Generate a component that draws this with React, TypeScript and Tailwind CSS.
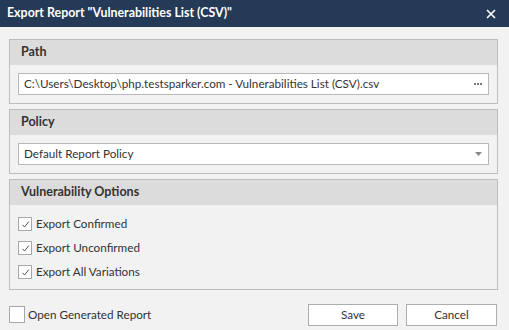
import React from 'react';

const font = { fontFamily: 'Lato, "Open Sans", sans-serif' };

const Check = ({ checked }: { checked: boolean }) => (
  <span className="w-[14px] h-[14px] border border-[#a8a8a8] bg-white flex items-center justify-center shrink-0">
    {checked && (
      <svg width="9" height="9" viewBox="0 0 9 9">
        <path d="M1.5 4.8 L3.5 7 L7.8 1.6" fill="none" stroke="#555" strokeWidth="1" />
      </svg>
    )}
  </span>
);

const Group = ({ title, children }: { title: string; children: React.ReactNode }) => (
  <div className="border border-[#bdbdbd] bg-[#f2f2f2]">
    <div className="h-[25px] bg-[#dcdcdc] flex items-center px-[11px] text-[12.5px] font-bold text-[#333]">{title}</div>
    {children}
  </div>
);

export default function App() {
  const options = ['Export Confirmed', 'Export Unconfirmed', 'Export All Variations'];
  return (
    <div className="w-[509px] h-[330px] bg-[#f2f2f2] flex flex-col text-[#333]" style={font}>
      <div className="h-[27px] bg-[#243a56] flex items-center justify-between pl-[7px] pr-[13px] text-white">
        <span className="text-[12.4px] font-bold">Export Report "Vulnerabilities List (CSV)"</span>
        <svg width="10" height="10" viewBox="0 0 10 10">
          <path d="M1 1 L9 9 M9 1 L1 9" stroke="#fff" strokeWidth="1.6" />
        </svg>
      </div>
      <div className="flex flex-col gap-[5px] px-[9px] pt-[12px] pr-[11px]">
        <Group title="Path">
          <div className="px-[8px] pt-[8px] pb-[8px]">
            <div className="h-[22px] bg-white border border-[#b8b8b8] flex items-center justify-between pl-[5px] pr-[6px] text-[11.7px]">
              <span>C:\Users\Desktop\php.testsparker.com - Vulnerabilities List (CSV).csv</span>
              <span className="flex gap-[1px]">
                <span className="w-[2px] h-[2px] bg-[#777]" />
                <span className="w-[2px] h-[2px] bg-[#777]" />
                <span className="w-[2px] h-[2px] bg-[#777]" />
              </span>
            </div>
          </div>
        </Group>
        <Group title="Policy">
          <div className="px-[8px] pt-[8px] pb-[8px]">
            <div className="h-[22px] bg-white border border-[#b8b8b8] flex items-center justify-between pl-[5px] pr-[6px] text-[11.7px]">
              <span>Default Report Policy</span>
              <svg width="7" height="4" viewBox="0 0 7 4">
                <path d="M0 0 L7 0 L3.5 4 Z" fill="#888" />
              </svg>
            </div>
          </div>
        </Group>
        <Group title="Vulnerability Options">
          <div className="flex flex-col gap-[10px] px-[8px] pt-[12px] pb-[10px]">
            {options.map((o) => (
              <label key={o} className="flex items-center gap-[4px] text-[11.7px] h-[14px]">
                <Check checked />
                <span>{o}</span>
              </label>
            ))}
          </div>
        </Group>
      </div>
      <div className="flex items-center justify-between pl-[9px] pr-[12px] mt-[14px]">
        <label className="flex items-center gap-[3px] text-[11.7px]">
          <span className="w-[16px] h-[17px] border border-[#a8a8a8] bg-white" />
          <span>Open Generated Report</span>
        </label>
        <div className="flex gap-[8px]">
          <button className="w-[90px] h-[22px] bg-white border border-[#adadad] text-[11.7px]">Save</button>
          <button className="w-[91px] h-[22px] bg-white border border-[#adadad] text-[11.7px]">Cancel</button>
        </div>
      </div>
    </div>
  );
}
